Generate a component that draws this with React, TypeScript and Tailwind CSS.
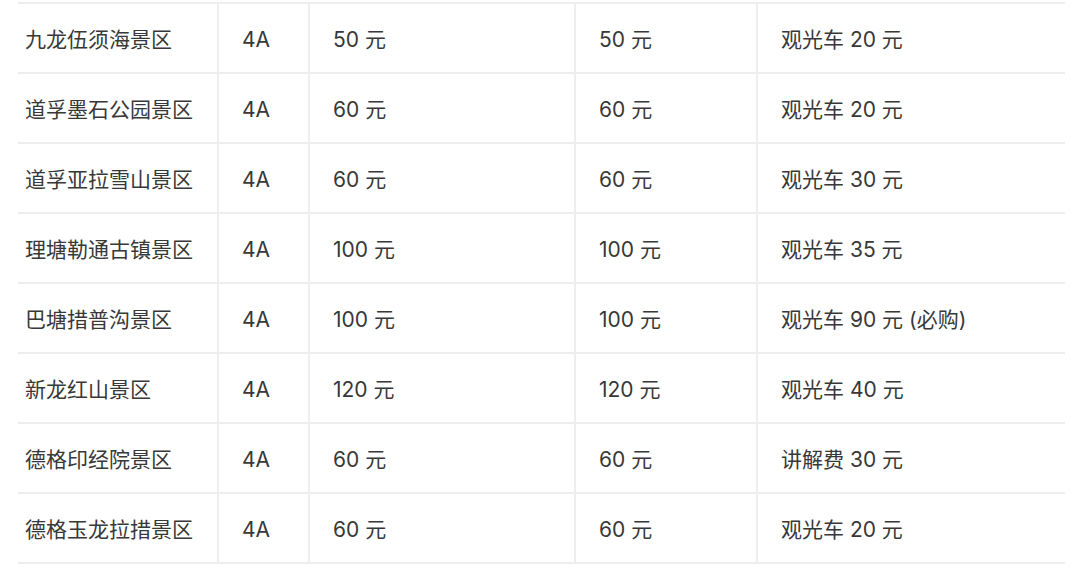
import React from "react";

interface Spot {
    name: string;
    level: string;
    peak: string;
    offPeak: string;
    extra: string;
}

const spots: Spot[] = [
    { name: "九龙伍须海景区", level: "4A", peak: "50 元", offPeak: "50 元", extra: "观光车 20 元" },
    { name: "道孚墨石公园景区", level: "4A", peak: "60 元", offPeak: "60 元", extra: "观光车 20 元" },
    { name: "道孚亚拉雪山景区", level: "4A", peak: "60 元", offPeak: "60 元", extra: "观光车 30 元" },
    { name: "理塘勒通古镇景区", level: "4A", peak: "100 元", offPeak: "100 元", extra: "观光车 35 元" },
    { name: "巴塘措普沟景区", level: "4A", peak: "100 元", offPeak: "100 元", extra: "观光车 90 元 (必购)" },
    { name: "新龙红山景区", level: "4A", peak: "120 元", offPeak: "120 元", extra: "观光车 40 元" },
    { name: "德格印经院景区", level: "4A", peak: "60 元", offPeak: "60 元", extra: "讲解费 30 元" },
    { name: "德格玉龙拉措景区", level: "4A", peak: "60 元", offPeak: "60 元", extra: "观光车 20 元" },
];

export default function App() {
    return (
        <div
            className="bg-white w-[1080px] h-[575px] overflow-hidden text-[#383838] text-[21px]"
            style={{ fontFamily: '"Helvetica Neue", Inter, "Noto Sans CJK SC", sans-serif' }}
        >
            <div className="ml-[18px] mt-[2px] w-[1047px] border-t-2 border-[#eeeeee]">
                {spots.map((s) => (
                    <div
                        key={s.name}
                        className="grid grid-cols-[199px_91px_266px_182px_309px] h-[70px] border-b-2 border-[#eeeeee]"
                    >
                        <div className="flex items-center pl-[7px] pt-[3px]">{s.name}</div>
                        <div className="flex items-center pl-[23px] pt-[3px] border-l-2 border-[#eeeeee]">{s.level}</div>
                        <div className="flex items-center pl-[23px] pt-[3px] border-l-2 border-[#eeeeee]">{s.peak}</div>
                        <div className="flex items-center pl-[23px] pt-[3px] border-l-2 border-[#eeeeee]">{s.offPeak}</div>
                        <div className="flex items-center pl-[23px] pt-[3px] border-l-2 border-[#eeeeee]">{s.extra}</div>
                    </div>
                ))}
            </div>
        </div>
    );
}
